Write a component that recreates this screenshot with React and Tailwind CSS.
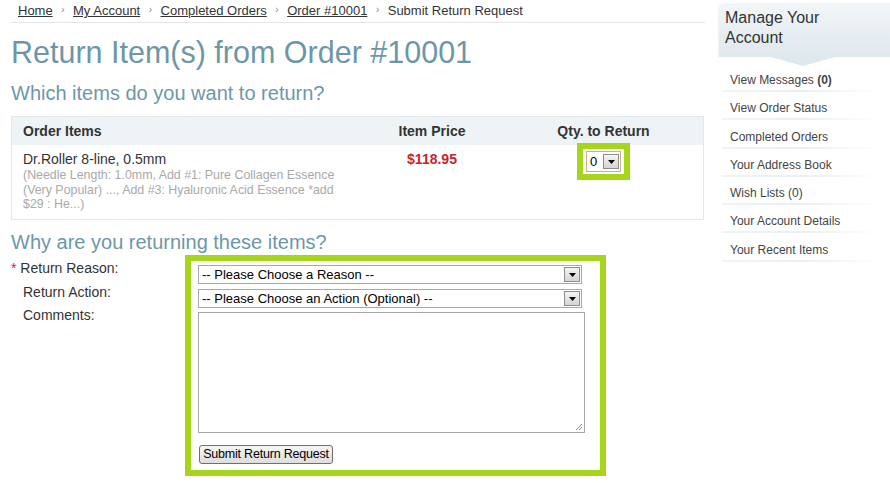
import React from "react";

const GREEN = "border-[#a6d61c]";

function FakeSelect({ text, className }) {
  return (
    <div className={"flex items-center justify-between bg-white border border-[#a9a9a9] h-[19px] pl-[3px] pr-[1px] " + className}>
      <span className="text-[13px] leading-[17px] text-black whitespace-nowrap">{text}</span>
      <DropBtn />
    </div>
  );
}

function DropBtn() {
  return (
    <div className="w-[16px] h-[15px] border border-[#8e8e8e] bg-gradient-to-b from-[#f4f4f4] to-[#d4d4d4] flex items-center justify-center">
      <svg width="7" height="4" viewBox="0 0 7 4">
        <polygon points="0,0 7,0 3.5,4" fill="#000" />
      </svg>
    </div>
  );
}

function Crumb({ children }) {
  return <span className="underline text-[#333]">{children}</span>;
}

function Sep() {
  return <span className="text-[#888] text-[10px] mx-[8.5px] relative top-[-1px]">›</span>;
}

const sideItems = [
  <>View Messages <b>(0)</b></>,
  "View Order Status",
  "Completed Orders",
  "Your Address Book",
  "Wish Lists (0)",
  "Your Account Details",
  "Your Recent Items",
];

export default function App() {
  return (
    <div
      className="w-[890px] h-[483px] bg-white flex overflow-hidden text-[#333]"
      style={{ fontFamily: '"Liberation Sans", Arial, sans-serif' }}
    >
      {/* Main column */}
      <div className="w-[705px] pl-[11px] shrink-0">
        {/* Breadcrumb */}
        <div className="-ml-[1px] pl-[8px] h-[23px] border-b border-[#e6e6e6] text-[13px] leading-[22px] flex items-center">
          <Crumb>Home</Crumb>
          <Sep />
          <Crumb>My Account</Crumb>
          <Sep />
          <Crumb>Completed Orders</Crumb>
          <Sep />
          <Crumb>Order #10001</Crumb>
          <Sep />
          <span>Submit Return Request</span>
        </div>

        <h1 className="mt-[11px] text-[30.5px] leading-[36px] text-[#6d97a7] font-normal">
          Return Item(s) from Order #10001
        </h1>
        <h2 className="mt-[11px] text-[20px] leading-[24px] text-[#6d97a7] font-normal">
          Which items do you want to return?
        </h2>

        {/* Table */}
        <div className="mt-[11px] w-[693px] border border-[#e3e8eb]">
          <div className="grid grid-cols-[348px_144px_1fr] h-[28px] bg-[#eef3f6] text-[14px] font-bold leading-[28px] text-[#333]">
            <div className="pl-[11px]">Order Items</div>
            <div className="text-center">Item Price</div>
            <div className="text-center">Qty. to Return</div>
          </div>
          <div className="grid grid-cols-[348px_144px_1fr] h-[74px]">
            <div className="pl-[11px] pt-[5px]">
              <div className="text-[14px] leading-[18px] text-[#333]">Dr.Roller 8-line, 0.5mm</div>
              <div className="text-[12.4px] leading-[14.5px] text-[#a9a9a9] whitespace-nowrap">
                (Needle Length: 1.0mm, Add #1: Pure Collagen Essence
                <br />
                (Very Popular) ..., Add #3: Hyaluronic Acid Essence *add
                <br />
                $29 : He...)
              </div>
            </div>
            <div className="pt-[5px] text-center text-[14px] leading-[18px] font-bold text-[#c6252b]">
              $118.95
            </div>
            <div className="flex justify-center items-start">
              <div className={"-mt-[2px] border-[6px] " + GREEN + " px-[3px] py-[2px] bg-white"}>
                <div className="w-[35px] h-[21px] border border-[#c4b288] bg-white flex items-center justify-between pl-[3px] pr-[1px]">
                  <span className="text-[13px] leading-[15px] text-black">0</span>
                  <DropBtn />
                </div>
              </div>
            </div>
          </div>
        </div>

        <h2 className="mt-[10px] text-[20px] leading-[24px] text-[#6d97a7] font-normal">
          Why are you returning these items?
        </h2>

        {/* Form */}
        <div className="mt-[1px] grid grid-cols-[174px_421px]">
          <div className="pt-[2px] text-[14px] leading-[23.5px] text-[#333]">
            <div>
              <span className="text-[#c8262b]">*</span> Return Reason:
            </div>
            <div className="pl-[12px]">Return Action:</div>
            <div className="pl-[12px]">Comments:</div>
          </div>
          <div className={"border-[6px] " + GREEN + " pl-[7px] pt-[4px] pb-[6px] flex flex-col"}>
            <FakeSelect text="-- Please Choose a Reason --" className="w-[384px]" />
            <FakeSelect text="-- Please Choose an Action (Optional) --" className="w-[384px] mt-[5px]" />
            <div className="mt-[4px] w-[387px] h-[121px] border border-[#a9a9a9] bg-white relative">
              <svg className="absolute right-[1px] bottom-[1px]" width="9" height="9" viewBox="0 0 9 9">
                <line x1="8" y1="2" x2="2" y2="8" stroke="#8a8a8a" strokeWidth="1" />
                <line x1="8" y1="5" x2="5" y2="8" stroke="#8a8a8a" strokeWidth="1" />
              </svg>
            </div>
            <div className="mt-[12px] flex">
              <button className="ml-[1px] h-[19px] w-[134px] border border-[#6f6f6f] rounded-[3px] bg-gradient-to-b from-[#f5f5f5] to-[#dedede] text-[12.5px] leading-[15px] text-black px-0 whitespace-nowrap tracking-[-0.2px]">
                Submit Return Request
              </button>
            </div>
          </div>
        </div>
      </div>

      {/* Sidebar */}
      <div className="ml-[14px] w-[171px] shrink-0 pt-[3px]">
        <div className="rounded-tl-[6px] bg-gradient-to-b from-[#f2f6f8] to-[#dfe8ed] shadow-[-1px_0_2px_rgba(0,0,0,0.06)] pl-[6px] pt-[5px] pb-[9px] text-[16px] leading-[20px] text-[#333]">
          Manage Your
          <br />
          Account
        </div>
        <svg width="171" height="9" viewBox="0 0 171 9" className="block">
          <polygon points="52,0 116,0 84,9" fill="#dfe8ed" />
        </svg>
        <div>
          {sideItems.map((t, i) => (
            <div key={i} className="h-[28.3px] pt-[6px] pl-[11px]">
              <div className="text-[12px] leading-[16px] text-[#444]">{t}</div>
              <div className="mt-[2px] -ml-[8px] w-[160px] h-[2px] bg-gradient-to-r from-[#f1f4f6] via-[#e9eff2] to-transparent" />
            </div>
          ))}
        </div>
      </div>
    </div>
  );
}
